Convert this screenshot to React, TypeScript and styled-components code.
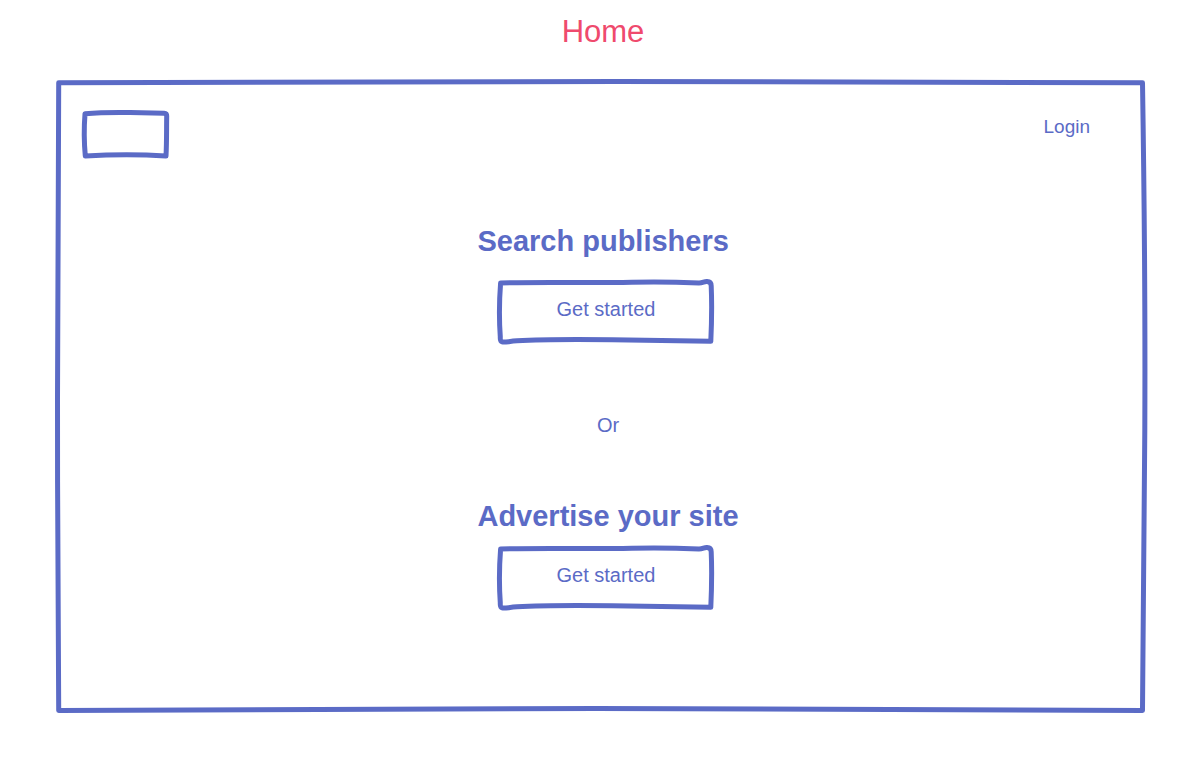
import React from "react";
import styled, { createGlobalStyle } from "styled-components";

const ink = "#5b6bc6";
const accent = "#ef4a6d";

const GlobalStyle = createGlobalStyle`
  *, *::before, *::after { box-sizing: border-box; }
  body {
    margin: 0;
    background: #fff;
    color: ${ink};
    font-family: "Liberation Sans", Arial, sans-serif;
    font-size: 20px;
    line-height: 24px;
  }
`;

const Page = styled.div`
  padding: 12px 56px 55px;
`;

const PageTitle = styled.h1`
  margin: 0 0 28px;
  padding-left: 4px;
  color: ${accent};
  font-size: 31px;
  font-weight: 400;
  line-height: 40px;
  text-align: center;
`;

const Frame = styled.section`
  position: relative;
  padding-bottom: 103px;
`;

const Outline = styled.svg`
  position: absolute;
  inset: 0;
  width: 100%;
  height: 100%;
  overflow: visible;
  pointer-events: none;
  fill: none;
  stroke: ${ink};
  stroke-width: 5px;
  stroke-linejoin: round;
  stroke-linecap: round;

  path { vector-effect: non-scaling-stroke; }
`;

const Header = styled.header`
  position: relative;
  display: flex;
  justify-content: space-between;
  align-items: flex-start;
  padding: 30px 56px 0 26px;
`;

const Logo = styled.a`
  position: relative;
  width: 87px;
  height: 49px;
`;

const LoginLink = styled.a`
  margin-top: 5px;
  color: inherit;
  font-size: 19px;
  text-decoration: none;
`;

const Main = styled.main`
  position: relative;
  display: flex;
  flex-direction: column;
  align-items: center;
  padding: 64px 0 0 14px;
`;

const Choices = styled.div`
  display: flex;
  flex-direction: column;
`;

const Choice = styled.section<{ $gap: number }>`
  display: flex;
  flex-direction: column;
  align-items: flex-start;
  gap: ${({ $gap }) => $gap}px;
`;

const ChoiceTitle = styled.h2`
  margin: 0;
  font-size: 29px;
  font-weight: 700;
  line-height: 36px;
`;

const StartButton = styled.button`
  position: relative;
  width: 217px;
  height: 65px;
  margin-left: 20px;
  padding: 0 0 5px;
  border: 0;
  background: none;
  color: inherit;
  font: inherit;
  cursor: pointer;
`;

const Divider = styled.p`
  margin: 69px 0 61px;
  text-align: center;
`;

const FrameOutline = () => (
  <Outline viewBox="0 0 1090 633" preserveAspectRatio="none" aria-hidden="true">
    <path d="M2.7 2.7 C180 2 370 1.4 560 1.5 C760 1.6 930 2.2 1086.5 2.8 C1088.2 110 1089.3 240 1088.8 350 C1088.5 460 1087.5 550 1086.5 630.5 C900 628.6 720 628.3 540 628.5 C350 628.7 170 629.4 2.7 630.5 C2 500 1.4 420 1.5 320 C1.6 210 2 100 2.7 2.7 Z" />
  </Outline>
);

const LogoOutline = () => (
  <Outline viewBox="0 0 87 49" preserveAspectRatio="none" aria-hidden="true">
    <path d="M3 3.7 C18 2.5 34 2.4 48 2.6 C62 2.8 72 3 82 3.3 Q84.8 3.6 84.7 6 C84.5 20 84.7 34 84 46 C60 44.4 28 44.5 3.3 46 C2 32 1.9 18 3 3.7 Z" />
  </Outline>
);

const ButtonOutline = () => (
  <Outline viewBox="0 0 217 65" preserveAspectRatio="none" aria-hidden="true">
    <path d="M3.6 3.9 C45 3 95 4.1 135 3.2 C165 2.5 180 3 202 3.9 C206 3.9 207 2.2 210 2.4 Q214.3 2.6 214.2 7 C215 25 214.6 45 213.8 62.3 C190 61.8 155 61.2 115 60.8 C70 60.3 38 60.8 20 61.8 C11 62.5 8 63.6 5 62.9 Q3 62.5 3.3 58 C2 40 2.2 22 3.6 3.9 Z" />
  </Outline>
);

const GetStarted = () => (
  <StartButton type="button">
    <ButtonOutline />
    Get started
  </StartButton>
);

export default function App() {
  return (
    <>
      <GlobalStyle />
      <Page>
        <PageTitle>Home</PageTitle>
        <Frame>
          <FrameOutline />
          <Header>
            <Logo href="#" aria-label="Homepage">
              <LogoOutline />
            </Logo>
            <LoginLink href="#login">Login</LoginLink>
          </Header>
          <Main>
            <Choices>
              <Choice $gap={20}>
                <ChoiceTitle>Search publishers</ChoiceTitle>
                <GetStarted />
              </Choice>
              <Divider>Or</Divider>
              <Choice $gap={11}>
                <ChoiceTitle>Advertise your site</ChoiceTitle>
                <GetStarted />
              </Choice>
            </Choices>
          </Main>
        </Frame>
      </Page>
    </>
  );
}
